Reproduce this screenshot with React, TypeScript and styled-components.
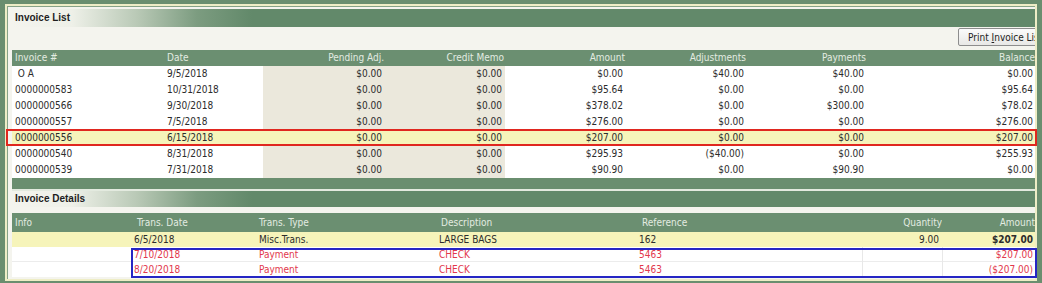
import styled, { createGlobalStyle, css } from 'styled-components'

const FONT = `"DejaVu Sans Condensed", "Liberation Sans", sans-serif`
const GREEN = '#6a8e6f'
const HEAD_GREEN = '#6b8f71'

type Align = 'left' | 'right'

interface Column {
  label: string
  width: number
  align?: Align
  shaded?: boolean
  pad?: number
  headPad?: number
  lined?: boolean
}

const invoiceColumns: Column[] = [
  { label: 'Invoice #', width: 151, pad: 3 },
  { label: 'Date', width: 100, pad: 4 },
  { label: 'Pending Adj.', width: 122, align: 'right', shaded: true, headPad: 1 },
  { label: 'Credit Memo', width: 120, align: 'right', shaded: true, headPad: 1 },
  { label: 'Amount', width: 121, align: 'right', headPad: 1 },
  { label: 'Adjustments', width: 121, align: 'right', headPad: 1 },
  { label: 'Payments', width: 120, align: 'right', headPad: 1 },
  { label: 'Balance', width: 168, align: 'right', pad: 2, headPad: 0 },
]

const invoices = [
  { cells: ['\u00a0O A', '9/5/2018', '$0.00', '$0.00', '$0.00', '$40.00', '$40.00', '$0.00'] },
  { cells: ['0000000583', '10/31/2018', '$0.00', '$0.00', '$95.64', '$0.00', '$0.00', '$95.64'] },
  { cells: ['0000000566', '9/30/2018', '$0.00', '$0.00', '$378.02', '$0.00', '$300.00', '$78.02'] },
  { cells: ['0000000557', '7/5/2018', '$0.00', '$0.00', '$276.00', '$0.00', '$0.00', '$276.00'] },
  { cells: ['0000000556', '6/15/2018', '$0.00', '$0.00', '$207.00', '$0.00', '$0.00', '$207.00'], selected: true },
  { cells: ['0000000540', '8/31/2018', '$0.00', '$0.00', '$295.93', '($40.00)', '$0.00', '$255.93'] },
  { cells: ['0000000539', '7/31/2018', '$0.00', '$0.00', '$90.90', '$0.00', '$90.90', '$0.00'] },
]

const detailColumns: Column[] = [
  { label: 'Info', width: 119, pad: 3, headPad: 3 },
  { label: 'Trans. Date', width: 124, pad: 3, headPad: 6 },
  { label: 'Trans. Type', width: 181, pad: 4, headPad: 4 },
  { label: 'Description', width: 200, pad: 3, headPad: 5 },
  { label: 'Reference', width: 226, pad: 3, headPad: 6 },
  { label: 'Quantity', width: 80, align: 'right', pad: 3, headPad: 0, lined: true },
  { label: 'Amount', width: 93, align: 'right', pad: 2, headPad: 0, lined: true },
]

const details = [
  ['', '7/10/2018', 'Payment', 'CHECK', '5463', '', '$207.00'],
  ['', '8/20/2018', 'Payment', 'CHECK', '5463', '', '($207.00)'],
]

const template = (cols: Column[]) => cols.map((c) => `${c.width}px`).join(' ')

const GlobalStyle = createGlobalStyle`
  html, body {
    margin: 0;
    padding: 0;
    background: ${GREEN};
  }
  body {
    font-family: ${FONT};
    font-size: 10px;
  }
`

const Frame = styled.div`
  box-sizing: border-box;
  width: 1042px;
  height: 283px;
  padding: 4px 5px 2px 5px;
  background: ${GREEN};
`

const Panel = styled.div`
  box-sizing: border-box;
  height: 100%;
  border: 2px solid #eeedc6;
  background: #f4f4ee;
  display: flex;
  flex-direction: column;
`

const Inner = styled.div`
  flex: 1;
  display: flex;
  flex-direction: column;
  border-left: 1px solid #86a287;
  border-top: 1px solid #86a287;
  padding: 2px 0 2px 4px;
`

const TitleBar = styled.div<{ $h: number }>`
  height: ${(p) => p.$h}px;
  line-height: ${(p) => p.$h}px;
  padding-left: 3px;
  font-weight: 700;
  font-family: "Liberation Sans", sans-serif;
  font-size: 10px;
  color: #1e1e1e;
  background: linear-gradient(
    90deg,
    #f4f4ee 0px,
    #eef0e8 60px,
    #b9c9b6 125px,
    #7c9c80 185px,
    #62896a 240px,
    #62896a 100%
  );
`

const Toolbar = styled.div`
  height: 23px;
  display: flex;
  justify-content: flex-end;
  overflow: hidden;
`

const PrintButton = styled.button`
  flex: none;
  box-sizing: border-box;
  width: 100px;
  height: 18px;
  margin: 1px -23px 0 0;
  padding: 0 0 0 9px;
  text-align: left;
  white-space: nowrap;
  border: 1px solid #8d8d8d;
  border-radius: 2px;
  background: linear-gradient(#fbfbfb, #e8e8e6);
  font-family: ${FONT};
  font-size: 10px;
  color: #222;
`

const Splitter = styled.div`
  height: 11px;
  background: ${GREEN};
  border-bottom: 2px solid #e3eadf;
`

const Gap = styled.div<{ $h: number }>`
  height: ${(p) => p.$h}px;
`

const Row = styled.div<{ $cols: string; $h: number; $tone?: 'plain' | 'hot' | 'soft'; $selected?: boolean; $ruled?: boolean }>`
  position: relative;
  display: grid;
  grid-template-columns: ${(p) => p.$cols};
  height: ${(p) => p.$h}px;
  line-height: ${(p) => p.$h}px;
  background: ${(p) => (p.$selected || p.$tone === 'soft' ? '#f6f4ba' : '#ffffff')};
  color: ${(p) => (p.$tone === 'hot' ? '#e2384c' : '#2c2c2c')};
  box-shadow: ${(p) => (p.$ruled ? 'inset 0 -1px 0 #ececec' : 'none')};
  ${(p) =>
    p.$selected &&
    css`
      &::after {
        content: '';
        position: absolute;
        left: -6px;
        right: -2px;
        top: -1px;
        bottom: 0;
        border: 2px solid #e0271f;
        pointer-events: none;
      }
    `}
`

const HeadRow = styled.div<{ $cols: string; $h: number }>`
  display: grid;
  grid-template-columns: ${(p) => p.$cols};
  height: ${(p) => p.$h}px;
  line-height: ${(p) => p.$h}px;
  background: ${HEAD_GREEN};
  color: #e3ece1;
`

const Cell = styled.div<{ $align?: Align; $pad: number; $shaded?: boolean; $lined?: boolean; $bold?: boolean }>`
  overflow: hidden;
  white-space: pre;
  text-align: ${(p) => p.$align ?? 'left'};
  padding-left: ${(p) => (p.$align === 'right' ? 0 : p.$pad)}px;
  padding-right: ${(p) => (p.$align === 'right' ? p.$pad : 0)}px;
  background: ${(p) => (p.$shaded ? '#ebe8dc' : 'transparent')};
  border-left: ${(p) => (p.$lined ? '1px solid #e8e8e8' : 'none')};
  font-weight: ${(p) => (p.$bold ? 700 : 400)};
`

const SelectedGroup = styled.div`
  position: relative;
  &::after {
    content: '';
    position: absolute;
    left: 119px;
    right: -2px;
    top: 1px;
    bottom: -1px;
    border: 2px solid #2626c4;
    pointer-events: none;
  }
`

function Header({ columns, h }: { columns: Column[]; h: number }) {
  return (
    <HeadRow $cols={template(columns)} $h={h}>
      {columns.map((c) => (
        <Cell key={c.label} $align={c.align} $pad={c.headPad ?? c.pad ?? 3}>
          {c.label}
        </Cell>
      ))}
    </HeadRow>
  )
}

export default function App() {
  const listCols = template(invoiceColumns)
  const detailCols = template(detailColumns)

  return (
    <>
      <GlobalStyle />
      <Frame>
        <Panel>
          <Inner>
            <TitleBar $h={18}>Invoice List</TitleBar>
            <Toolbar>
              <PrintButton type='button'>
                Print <u>I</u>nvoice List
              </PrintButton>
            </Toolbar>
            <Header columns={invoiceColumns} h={16} />
            {invoices.map((inv) => (
              <Row key={inv.cells[0]} $cols={listCols} $h={16} $selected={inv.selected}>
                {inv.cells.map((v, i) => {
                  const col = invoiceColumns[i]
                  return (
                    <Cell
                      key={col.label}
                      $align={col.align}
                      $pad={col.pad ?? 3}
                      $shaded={col.shaded && !inv.selected}
                    >
                      {v}
                    </Cell>
                  )
                })}
              </Row>
            ))}

            <Splitter />

            <TitleBar $h={16}>Invoice Details</TitleBar>
            <Gap $h={6} />
            <Header columns={detailColumns} h={19} />
            <Row $cols={detailCols} $h={15} $tone='soft'>
              {['', '6/5/2018', 'Misc.Trans.', 'LARGE BAGS', '162', '9.00', '$207.00'].map((v, i) => {
                const col = detailColumns[i]
                return (
                  <Cell key={col.label} $align={col.align} $pad={col.pad ?? 3} $bold={i === 6}>
                    {v}
                  </Cell>
                )
              })}
            </Row>
            <SelectedGroup>
              {details.map((d, r) => (
                <Row key={d[1]} $cols={detailCols} $h={15} $tone='hot' $ruled={r === 0}>
                  {d.map((v, i) => {
                    const col = detailColumns[i]
                    return (
                      <Cell key={col.label} $align={col.align} $pad={col.pad ?? 3} $lined={col.lined}>
                        {v}
                      </Cell>
                    )
                  })}
                </Row>
              ))}
            </SelectedGroup>
          </Inner>
        </Panel>
      </Frame>
    </>
  )
}
